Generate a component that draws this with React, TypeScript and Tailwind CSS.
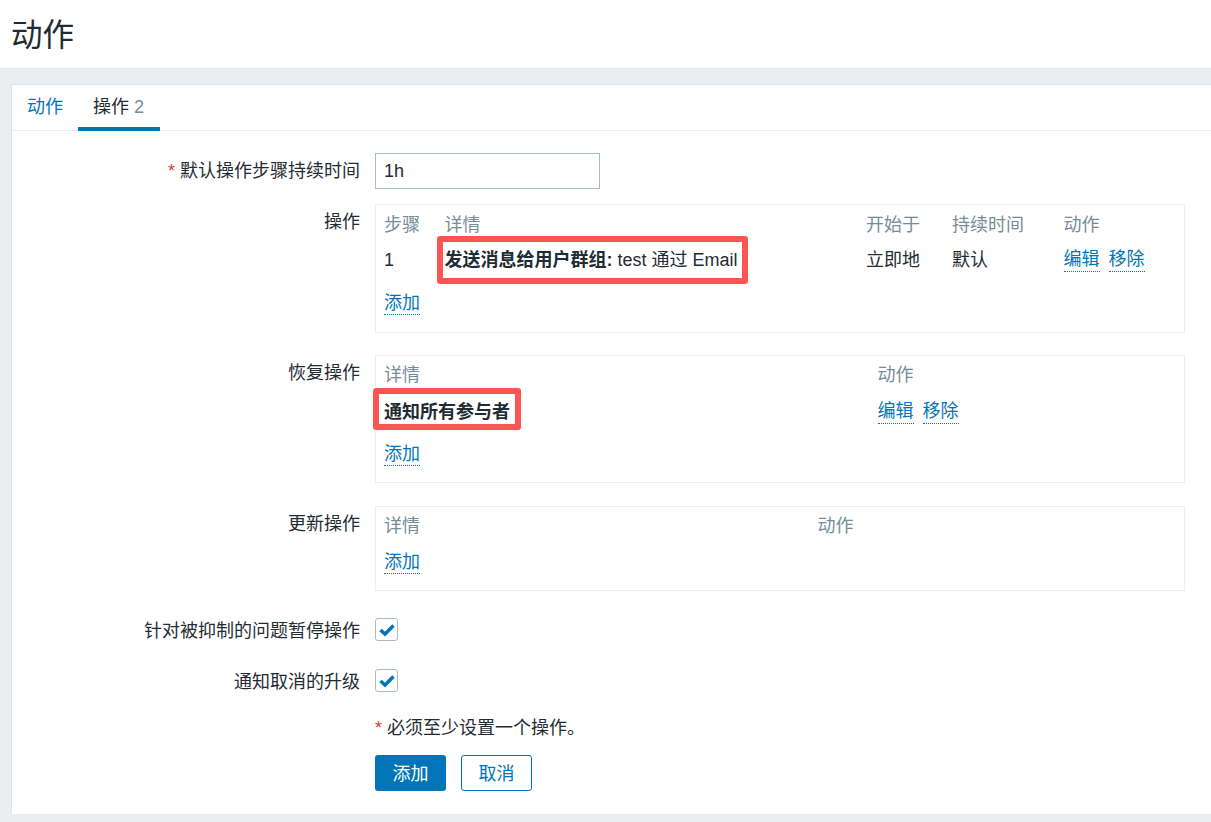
const FONT = '[font-family:"Liberation_Sans","Noto_Sans_CJK_SC",sans-serif]'

function TextLink({ children }: { children: React.ReactNode }) {
  return <a className="inline-block border-b border-dotted border-[#0275b8] leading-[22px] text-[#0275b8]">{children}</a>
}

function Red({ className, children }: { className: string; children: React.ReactNode }) {
  return (
    <span className="relative inline-block">
      {children}
      {/* annotation drawn over the screenshot */}
      <span className={`pointer-events-none absolute rounded-[3px] border-[6px] border-[#fd5454] ${className}`} />
    </span>
  )
}

function Label({ children, className = "" }: { children: React.ReactNode; className?: string }) {
  return <div className={`text-right ${className}`}>{children}</div>
}

function Checkbox() {
  return (
    <div className="flex h-[23px] w-[23px] items-center justify-center rounded-[3px] border border-[#acbbc2]">
      <svg width="16" height="14" viewBox="0 0 16 14" fill="none">
        <path d="M1.5 7 L6 11 L14.5 2.5" stroke="#0275b8" strokeWidth="3.5" />
      </svg>
    </div>
  )
}

export default function App() {
  return (
    <div className={`h-[822px] overflow-hidden bg-[#ebeef0] text-[18px] leading-6 text-[#1f2c33] ${FONT}`}>
      <header className="h-[69px] border-b border-[#dfe4e7] bg-white pl-[11px] pt-[15px]">
        <h1 className="text-[31.5px] leading-10">动作</h1>
      </header>

      <main className="ml-[11px] mt-[15px] h-[730px] border-l border-t border-[#dfe4e7] bg-white">
        <nav className="flex h-[46px] border-b border-[#ebeef0] pl-[3px]">
          <div className="px-3 pt-[10px] text-[#0275b8]">动作</div>
          <div className="ml-[3px] h-[46px] border-b-4 border-[#0275b8] pl-[15px] pr-[16px] pt-[10px]">
            操作 <span className="text-[#768d99]">2</span>
          </div>
        </nav>

        <div className="grid grid-cols-[348px_810px] gap-x-[15px] pt-[22px]">
          <Label className="pt-[6px]">
            <span className="text-[#e33734]">*</span> 默认操作步骤持续时间
          </Label>
          <input
            defaultValue="1h"
            className="h-9 w-[225px] border border-[#acbbc2] px-2 text-[18px] text-[#1f2c33] outline-none"
          />

          <Label className="mt-[15px] pt-[6px]">操作</Label>
          <section className="mt-[15px] h-[129px] border border-[#ebeef0] pl-2 pt-2">
            <div className="grid h-6 grid-cols-[60.5px_421.5px_86px_111.5px_1fr] text-[#768d99]">
              <div>步骤</div>
              <div>详情</div>
              <div>开始于</div>
              <div>持续时间</div>
              <div>动作</div>
            </div>
            <div className="mt-[11px] grid h-6 grid-cols-[60.5px_421.5px_86px_111.5px_1fr]">
              <div>1</div>
              <div>
                <Red className="-bottom-[12px] -left-[7.5px] -right-[10px] -top-[12px]">
                  <b>发送消息给用户群组:</b> test 通过 Email
                </Red>
              </div>
              <div>立即地</div>
              <div>默认</div>
              <div className="flex gap-[9px]">
                <TextLink>编辑</TextLink>
                <TextLink>移除</TextLink>
              </div>
            </div>
            <div className="mt-[19px]">
              <TextLink>添加</TextLink>
            </div>
          </section>

          <Label className="mt-[22px] pt-[6px]">恢复操作</Label>
          <section className="mt-[22px] h-[128px] border border-[#ebeef0] pl-2 pt-[7px]">
            <div className="grid h-6 grid-cols-[493.5px_1fr] text-[#768d99]">
              <div>详情</div>
              <div>动作</div>
            </div>
            <div className="mt-[13px] grid h-6 grid-cols-[493.5px_1fr]">
              <div>
                <Red className="-bottom-[6px] -left-[11px] -right-[11px] -top-[12px]">
                  <b>通知所有参与者</b>
                </Red>
              </div>
              <div className="flex gap-[9px]">
                <TextLink>编辑</TextLink>
                <TextLink>移除</TextLink>
              </div>
            </div>
            <div className="mt-[18px]">
              <TextLink>添加</TextLink>
            </div>
          </section>

          <Label className="mt-[23px] pt-[6px]">更新操作</Label>
          <section className="mt-[23px] h-[85px] border border-[#ebeef0] pl-2 pt-[7px]">
            <div className="grid h-6 grid-cols-[433.5px_1fr] text-[#768d99]">
              <div>详情</div>
              <div>动作</div>
            </div>
            <div className="mt-[12px]">
              <TextLink>添加</TextLink>
            </div>
          </section>

          <Label className="mt-[27px] pt-px">针对被抑制的问题暂停操作</Label>
          <div className="mt-[27px]">
            <Checkbox />
          </div>

          <Label className="mt-[26px] pt-px">通知取消的升级</Label>
          <div className="mt-[26px]">
            <Checkbox />
          </div>

          <div className="col-start-2 mt-[22px]">
            <span className="text-[#e33734]">*</span> 必须至少设置一个操作。
          </div>
          <div className="col-start-2 mt-[15px] flex gap-[15px]">
            <button className="h-9 w-[71px] rounded-[3px] bg-[#0275b8] pt-[2px] text-white">添加</button>
            <button className="h-9 w-[71px] rounded-[3px] border border-[#0275b8] pt-[2px] text-[#0275b8]">取消</button>
          </div>
        </div>
      </main>
    </div>
  )
}
